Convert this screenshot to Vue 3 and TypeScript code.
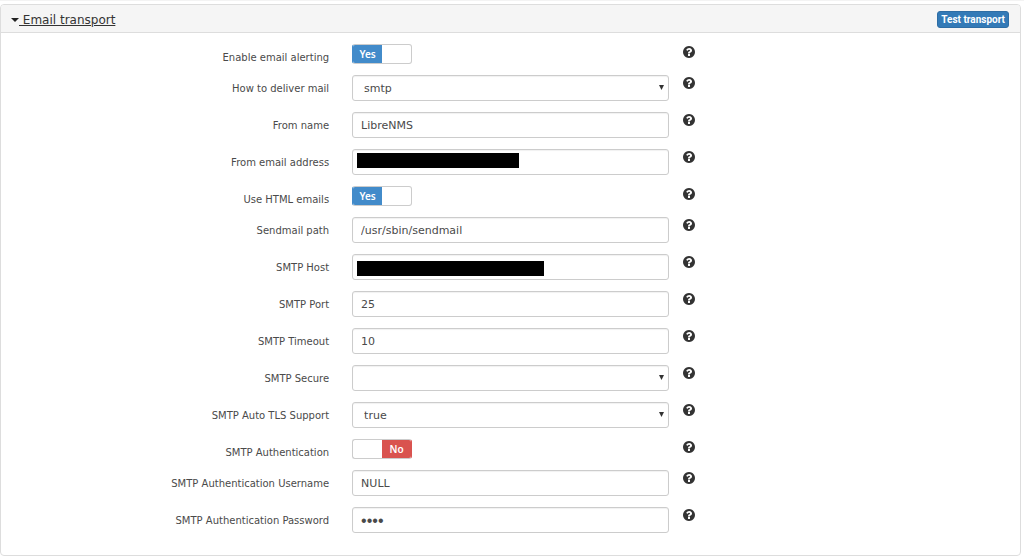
<script setup lang="ts">
import { reactive, ref } from 'vue'

interface Field {
  id: string
  label: string
  kind: 'switch' | 'select' | 'text' | 'password'
  value?: string
  on?: boolean
  options?: string[]
  redacted?: 'short' | 'long'
}

const open = ref(true)

const fields = reactive<Field[]>([
  { id: 'enable', label: 'Enable email alerting', kind: 'switch', on: true },
  { id: 'backend', label: 'How to deliver mail', kind: 'select', value: 'smtp', options: ['mail', 'sendmail', 'smtp'] },
  { id: 'from-name', label: 'From name', kind: 'text', value: 'LibreNMS' },
  { id: 'from-address', label: 'From email address', kind: 'text', value: '', redacted: 'short' },
  { id: 'html', label: 'Use HTML emails', kind: 'switch', on: true },
  { id: 'sendmail', label: 'Sendmail path', kind: 'text', value: '/usr/sbin/sendmail' },
  { id: 'host', label: 'SMTP Host', kind: 'text', value: '', redacted: 'long' },
  { id: 'port', label: 'SMTP Port', kind: 'text', value: '25' },
  { id: 'timeout', label: 'SMTP Timeout', kind: 'text', value: '10' },
  { id: 'secure', label: 'SMTP Secure', kind: 'select', value: '', options: ['', 'tls', 'ssl'] },
  { id: 'auto-tls', label: 'SMTP Auto TLS Support', kind: 'select', value: 'true', options: ['true', 'false'] },
  { id: 'auth', label: 'SMTP Authentication', kind: 'switch', on: false },
  { id: 'username', label: 'SMTP Authentication Username', kind: 'text', value: 'NULL' },
  { id: 'password', label: 'SMTP Authentication Password', kind: 'password', value: 'NULL' },
])
</script>

<template>
  <main class="page">
    <section class="panel">
      <header class="heading">
        <h4 class="title">
          <a href="#email" @click.prevent="open = !open">
            <svg class="caret" viewBox="0 0 8 4" aria-hidden="true"><path d="M0 0H8L4 4Z" /></svg>
            <span class="title-text">&nbsp;Email transport</span>
          </a>
        </h4>
        <button type="button" class="test">Test transport</button>
      </header>
      <form v-show="open" class="body" @submit.prevent>
        <div v-for="f in fields" :key="f.id" class="row">
          <label class="name" :for="f.id">{{ f.label }}</label>

          <div v-if="f.kind === 'switch'" class="switch" :class="{ on: f.on }">
            <input :id="f.id" v-model="f.on" type="checkbox" class="switch-input" />
            <span class="half">{{ f.on ? 'Yes' : '' }}</span>
            <span class="half">{{ f.on ? '' : 'No' }}</span>
          </div>

          <div v-else-if="f.kind === 'select'" class="field">
            <select :id="f.id" v-model="f.value" class="control select">
              <option v-for="o in f.options" :key="o" :value="o">{{ o }}</option>
            </select>
            <svg class="arrow" viewBox="0 0 5 5" aria-hidden="true"><path d="M0 0H5L2.5 5Z" /></svg>
          </div>

          <div v-else class="field">
            <input :id="f.id" v-model="f.value" :type="f.kind" class="control" :class="f.kind" autocomplete="off" />
            <span v-if="f.redacted" class="redaction" :class="f.redacted"></span>
          </div>

          <button type="button" class="help" :aria-label="'Help: ' + f.label">
            <svg viewBox="0 0 1536 1536" aria-hidden="true">
              <path
                d="M896 1248v-192q0-14-9-23t-23-9H672q-14 0-23 9t-9 23v192q0 14 9 23t23 9h192q14 0 23-9t9-23zm256-672q0-88-55.500-163T958 297t-170-41q-243 0-371 213-15 24 8 42l132 100q7 6 19 6 16 0 25-12 53-68 86-92 34-24 86-24 48 0 85.500 26t37.500 59q0 38-20 61t-68 45q-63 28-115.500 86.500T640 892v36q0 14 9 23t23 9h192q14 0 23-9t9-23q0-19 21.500-49.500T972 829q32-18 49-28.500t46-35 44.500-48 28-60.500 12.500-81zm384 192q0 209-103 385.500T1153.500 1433 768 1536t-385.500-103T103 1153.500 0 768t103-385.500T382.500 103 768 0t385.500 103T1433 382.500 1536 768z"
              />
            </svg>
          </button>
        </div>
      </form>
    </section>
  </main>
</template>

<style>
body {
  background: #fff;
}
</style>

<style scoped>
.page {
  padding: 4px 3px 0 0;
  border-top: 1px solid #f3f3f3;
  box-sizing: border-box;
  color: #4a4a4a;
  font-family: "DejaVu Sans", Verdana, sans-serif;
  font-size: 11px;
}
.page * {
  box-sizing: border-box;
}
.panel {
  margin-top: -1px;
  border: 1px solid #ddd;
  border-radius: 4px;
}
.heading {
  display: flex;
  align-items: center;
  justify-content: space-between;
  height: 28px;
  padding: 2px 11px 0 10px;
  background: #f5f5f5;
  border-bottom: 1px solid #ddd;
  border-radius: 3px 3px 0 0;
}
.title {
  margin: 0;
  font-size: 12px;
  font-weight: 400;
  line-height: 16px;
}
.title a {
  display: flex;
  align-items: center;
  color: #333;
  text-decoration: none;
}
.title-text {
  text-decoration: underline;
}
.caret {
  width: 8px;
  height: 4px;
  fill: #222;
}
.test {
  height: 17px;
  padding: 0 3px;
  border: 1px solid #2e6da4;
  border-radius: 3px;
  background: #337ab7;
  color: #fff;
  font: 700 10px/14px Roboto, sans-serif;
}
.body {
  display: flex;
  flex-direction: column;
  gap: 11px;
  padding: 11px 0 22px;
}
.row {
  display: grid;
  grid-template-columns: 32.2% 31.1% 12px;
  column-gap: 0;
  align-items: start;
}
.name {
  height: 20px;
  padding-top: 6px;
  font-size: 10px;
  line-height: 16px;
  text-align: right;
}
.field,
.switch {
  position: relative;
  margin-left: 23px;
}
.field {
  margin-right: -23px;
}
.control {
  display: block;
  width: 100%;
  height: 26px;
  margin: 0;
  padding: 1px 8px 0;
  border: 1px solid #ccc;
  border-radius: 3px;
  outline: 0;
  background: #fff;
  box-shadow: inset 0 1px 1px rgba(0, 0, 0, 0.06);
  color: #4a4a4a;
  font: 11px/16px "DejaVu Sans", Verdana, sans-serif;
}
.select {
  padding: 2px 11px 0;
  appearance: none;
}
.password {
  font-family: "Liberation Sans", Arial, sans-serif;
  font-size: 16px;
}
.arrow {
  position: absolute;
  top: 10px;
  right: 5px;
  width: 5px;
  height: 5px;
  fill: #333;
  pointer-events: none;
}
.redaction {
  position: absolute;
  left: 5px;
  height: 15px;
  background: #000;
}
.short {
  top: 4px;
  width: 162px;
}
.long {
  top: 7px;
  width: 187px;
}
.switch {
  display: flex;
  width: 60px;
  height: 20px;
  border: 1px solid #ccc;
  border-radius: 3px;
  overflow: hidden;
}
.switch-input {
  position: absolute;
  inset: 0;
  width: 100%;
  height: 100%;
  margin: 0;
  opacity: 0;
}
.half {
  flex: 1;
  color: #fff;
  font: 600 10px/18px "Noto Sans", sans-serif;
  text-align: center;
}
.on {
  border-left-color: #428bca;
}
.on .half:first-of-type {
  background: #428bca;
}
.switch:not(.on) {
  border-right-color: #d9534f;
}
.switch:not(.on) .half:last-of-type {
  background: #d9534f;
}
.help {
  width: 12px;
  height: 12px;
  margin: 2px 0 0 37px;
  padding: 0;
  border: 0;
  background: none;
}
.help svg {
  display: block;
  width: 12px;
  height: 12px;
  fill: #333;
}
</style>
